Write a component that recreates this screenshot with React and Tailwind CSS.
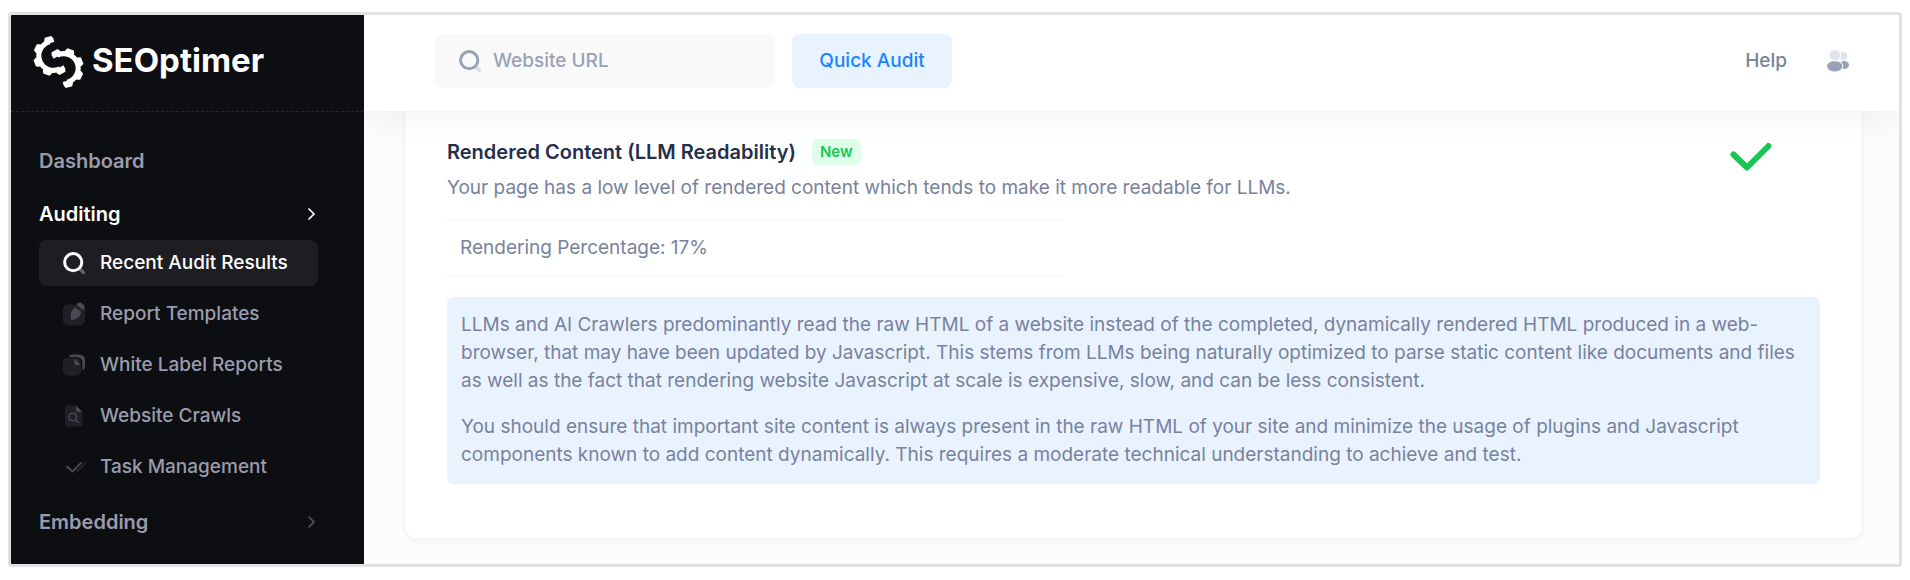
import { useState } from 'react'

const auditLinks = [
  { label: 'Recent Audit Results', icon: 'search' },
  { label: 'Report Templates', icon: 'pencil' },
  { label: 'White Label Reports', icon: 'copy' },
  { label: 'Website Crawls', icon: 'file' },
  { label: 'Task Management', icon: 'check' }
]

const SearchIcon = ({ className }) => (
  <svg viewBox="0 0 22 22" className={className} fill="none" stroke="currentColor" aria-hidden="true">
    <path d="M17.5 17.5l3 3" strokeWidth="3.4" strokeLinecap="round" opacity="0.3" />
    <circle cx="10.2" cy="10.2" r="8.6" strokeWidth="3" />
  </svg>
)

const PencilIcon = () => (
  <svg viewBox="0 0 22 23" className="h-6 w-[22px] text-[#4a4a57]" fill="currentColor" aria-hidden="true">
    <rect x="0" y="2" width="22" height="21" rx="5" opacity="0.3" />
    <path d="M14.2 .8a3.6 3.6 0 0 1 3.4-.7l3.2 2.4a3.4 3.4 0 0 1 .6 3.8l-1.5 1.4-6-5z" />
    <path d="M12.3 4.8l6 4.8c-.8 3.6-2.6 6-5.6 7.2l-4 .8c-.6 0-.9-.4-.9-1v-4.4c.6-3.4 2-5.8 4.5-7.4z" />
  </svg>
)

const CopyIcon = () => (
  <svg viewBox="0 0 22 22" className="h-[22px] w-[22px] text-[#4a4a57]" fill="currentColor" aria-hidden="true">
    <rect x="0" y="3.5" width="18" height="18" rx="5" opacity="0.3" />
    <path d="M5.5 2.3A5 5 0 0 1 9.5.5h7a5.5 5.5 0 0 1 5.5 5.5v6.5a5 5 0 0 1-2.5 4V8.5a5.5 5.5 0 0 0-5.5-5.5H8z" />
    <path d="M11.5 4.5l6 6.5h-4.5a1.5 1.5 0 0 1-1.5-1.5z" />
  </svg>
)

const FileIcon = () => (
  <svg viewBox="0 0 22 22" className="h-[22px] w-[22px] text-[#4a4a57]" fill="currentColor" aria-hidden="true">
    <path d="M4 .5h9l6.5 6.5v12.5a2 2 0 0 1-2 2H4a2 2 0 0 1-2-2v-17a2 2 0 0 1 2-2z" opacity="0.3" />
    <path d="M13 .5l6.5 6.5h-5a1.5 1.5 0 0 1-1.5-1.5z" />
    <g fill="none" stroke="currentColor" strokeWidth="1.5" strokeLinecap="round">
      <circle cx="9.8" cy="12" r="3.8" />
      <path d="M12.7 15l2.5 2.5" />
    </g>
  </svg>
)

const DoubleCheckIcon = () => (
  <svg viewBox="0 0 22 22" className="h-[22px] w-[22px] overflow-visible text-[#4a4a57]" fill="none" stroke="currentColor" strokeWidth="1.8" strokeLinecap="round" strokeLinejoin="round" aria-hidden="true">
    <path d="M4 10.5l5.5 5 8.5-8.5" />
    <path d="M14.5 15l8-8" opacity="0.4" />
  </svg>
)

const UsersIcon = () => (
  <svg viewBox="0 0 22 22" className="h-[22px] w-[22px] text-[#99a1b7]" fill="currentColor" aria-hidden="true">
    <ellipse cx="17.2" cy="15" rx="4.8" ry="4" />
    <ellipse cx="7.7" cy="16.3" rx="8.7" ry="6" fill="#fff" />
    <ellipse cx="7.7" cy="16.3" rx="7.7" ry="5.2" />
    <circle cx="16" cy="6" r="4" fill="#e0e3e9" />
    <circle cx="7.8" cy="5.2" r="6.2" fill="#fff" />
    <circle cx="7.8" cy="5.2" r="5.2" fill="#e0e3e9" />
  </svg>
)

const Chevron = ({ className }) => (
  <svg viewBox="0 0 7 12" className={className} fill="none" stroke="currentColor" strokeWidth="1.7" strokeLinecap="round" strokeLinejoin="round" aria-hidden="true">
    <path d="M1 1l5 5-5 5" />
  </svg>
)

const icons = {
  search: <SearchIcon className="h-[22px] w-[22px]" />,
  pencil: <PencilIcon />,
  copy: <CopyIcon />,
  file: <FileIcon />,
  check: <DoubleCheckIcon />
}

// One half of the logo, the other half is the same shape turned by 180 degrees
const HalfGear = () => (
  <g>
    <path d="M88 50A43 43 0 1 0 118 130" fill="none" stroke="#fff" strokeWidth="15" />
    {[62, 110, 158, 206, 255].map((angle) => (
      <path key={angle} d="M157 82v20l-8 4h-12V78h12z" fill="#fff" transform={`rotate(${angle} 98 92)`} />
    ))}
  </g>
)

const Logo = () => (
  <a href="#" className="flex items-center gap-2 text-white">
    <svg viewBox="38 30 152 160" className="h-[54px] w-[51px]" aria-hidden="true">
      <HalfGear />
      <g transform="rotate(180 114 110)">
        <HalfGear />
      </g>
    </svg>
    <span className="pb-1 text-[33px] leading-10 font-bold">SEOptimer</span>
  </a>
)

const Sidebar = () => {
  const [active, setActive] = useState('Recent Audit Results')

  return (
    <aside className="relative z-20 w-[353px] shrink-0 bg-[#0d0e12] text-[#9a9cae]">
      <div className="flex h-24 items-start pt-5 pl-[22px]">
        <Logo />
      </div>
      <nav className="border-t border-dashed border-[#26272f] pt-[26px] pr-[46px] pb-[18px] pl-7 text-[20px] leading-7 font-semibold">
        <a href="#" className="flex h-[46px] items-center">Dashboard</a>
        <button type="button" className="mt-[7px] flex h-[46px] w-full items-center justify-between pr-[3px] text-white">
          Auditing
          <Chevron className="h-3 w-[7px]" />
        </button>
        <ul className="mt-[3px] space-y-[5px] text-[19px] font-medium">
          {auditLinks.map((link) => (
            <li key={link.label}>
              <a
                href="#"
                onClick={() => setActive(link.label)}
                className={`flex h-[46px] items-center gap-[15px] rounded-lg pl-6 ${
                  active === link.label ? 'bg-[#1e1d22] text-white' : ''
                }`}
              >
                {icons[link.icon]}
                {link.label}
              </a>
            </li>
          ))}
        </ul>
        <button type="button" className="mt-[9px] flex h-[46px] w-full items-center justify-between pr-[3px]">
          Embedding
          <Chevron className="h-3 w-[7px] text-[#55565f]" />
        </button>
      </nav>
    </aside>
  )
}

const Header = () => {
  const [url, setUrl] = useState('')

  return (
    <header className="relative z-10 flex h-24 items-center justify-between bg-white pr-[50px] pb-1 pl-[71px] text-[19px] leading-7 font-medium shadow-[0_10px_30px_0_rgba(60,60,70,0.06)]">
      <form onSubmit={(e) => e.preventDefault()} className="flex gap-[17px]">
        <label className="flex h-[54px] w-[340px] items-center gap-3 rounded-lg bg-[#f9f9f9] px-6">
          <SearchIcon className="h-[22px] w-[22px] shrink-0 text-[#99a1b7]" />
          <input
            type="text"
            aria-label="Website URL"
            placeholder="Website URL"
            value={url}
            onChange={(e) => setUrl(e.target.value)}
            className="w-full bg-transparent placeholder:text-[#99a1b7] focus:outline-none"
          />
        </label>
        <button type="submit" className="h-[54px] w-40 rounded-lg bg-[#e9f3ff] text-[#1b84ff]">
          Quick Audit
        </button>
      </form>
      <div className="flex items-center gap-10">
        <a href="#" className="text-[#78829d]">Help</a>
        <button type="button" aria-label="Account">
          <UsersIcon />
        </button>
      </div>
    </header>
  )
}

const App = () => {
  return (
    <div className="bg-white px-2 pt-3 pb-[13px] font-['Inter',sans-serif]">
      <div className="flex overflow-hidden rounded border-3 border-[#e1e1e1]">
        <Sidebar />
        <main className="flex min-w-0 flex-1 flex-col bg-[#fcfcfc]">
          <Header />
          <section className="mr-9 mb-[25px] ml-10 rounded-b-xl border border-t-0 border-[#f1f1f4] bg-white px-[42px] pt-[27px] pb-[54px] text-[19px] leading-7 text-[#78829d] shadow-[0_3px_4px_0_rgba(0,0,0,0.03)]">
            <div className="flex items-start justify-between">
              <div>
                <div className="flex items-center gap-4">
                  <h2 className="text-[20px] font-semibold text-[#252f4a]">Rendered Content (LLM Readability)</h2>
                  <span className="rounded-md bg-[#dfffea] px-2 text-[15px] leading-[26px] font-semibold text-[#17c653]">New</span>
                </div>
                <p className="mt-2">
                  Your page has a low level of rendered content which tends to make it more readable for LLMs.
                </p>
              </div>
              <svg viewBox="0 0 42 28" className="mt-[5px] mr-12 h-7 w-[42px]" fill="none" stroke="#17c653" strokeWidth="6" strokeLinecap="round" strokeLinejoin="round" role="img" aria-label="Passed">
                <path d="M3.5 11.5L17 24.5 38.5 3" />
              </svg>
            </div>

            <table className="mt-[18px] w-[615px] border-y border-dashed border-[#f1f1f4]">
              <tbody>
                <tr>
                  <td className="h-[55px] px-[13px]">Rendering Percentage: 17%</td>
                </tr>
              </tbody>
            </table>

            <div className="mt-[21px] space-y-[18px] rounded-md bg-[#e9f3ff] px-[14px] pt-[14px] pb-[15px]">
              <p>
                LLMs and AI Crawlers predominantly read the raw HTML of a website instead of the completed, dynamically rendered HTML produced in a web-browser, that may have been updated by Javascript. This stems from LLMs being naturally optimized to parse static content like documents and files as well as the fact that rendering website Javascript at scale is expensive, slow, and can be less consistent.
              </p>
              <p>
                You should ensure that important site content is always present in the raw HTML of your site and minimize the usage of plugins and Javascript components known to add content dynamically. This requires a moderate technical understanding to achieve and test.
              </p>
            </div>
          </section>
        </main>
      </div>
    </div>
  )
}

export default App
